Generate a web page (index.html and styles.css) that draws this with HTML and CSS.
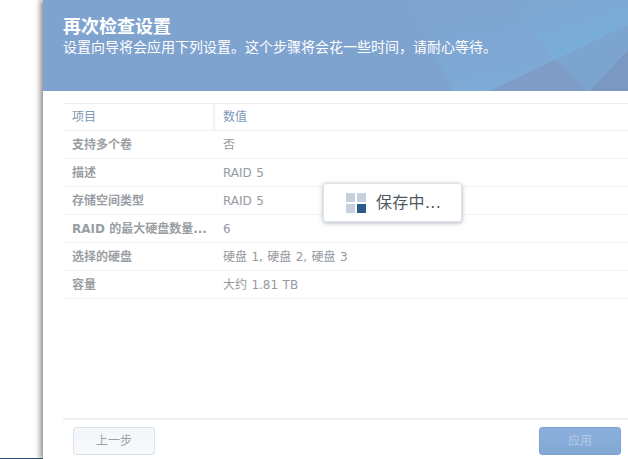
FILE: index.html
```html
<!DOCTYPE html>
<html lang="zh">
<head>
<meta charset="utf-8">
<title>再次检查设置</title>
<link rel="stylesheet" href="styles.css">
</head>
<body>
<div class="desktop">
  <section class="wizard">
    <header class="banner">
      <svg class="banner-art" width="585" height="91" viewBox="0 0 585 91" aria-hidden="true">
        <defs>
          <linearGradient id="glow" x1="0" y1="0" x2="0.6" y2="1">
            <stop offset="0" stop-color="#7ea5cf"/>
            <stop offset="1" stop-color="#79aedc"/>
          </linearGradient>
          <linearGradient id="mid" x1="0" y1="0" x2="0.4" y2="1">
            <stop offset="0" stop-color="#7fa3cf"/>
            <stop offset="1" stop-color="#7eaad6"/>
          </linearGradient>
        </defs>
        <polygon points="410,91 364,0 585,0 585,91" fill="url(#mid)"/>
        <polygon points="465,0 585,0 585,25 512,60" fill="url(#glow)"/>
        <polygon points="447,91 512,60 544,91" fill="#7e9cc5"/>
        <polygon points="512,60 585,25 585,50 547,91 544,91" fill="#7da4cf"/>
        <polygon points="547,91 585,50 585,91" fill="#7a98c0"/>
      </svg>
      <h1 class="banner-title">再次检查设置</h1>
      <p class="banner-sub">设置向导将会应用下列设置。这个步骤将会花一些时间&#xFF0C;请耐心等待。</p>
    </header>

    <main class="content">
      <div class="grid">
        <div class="row row-head">
          <div class="cell cell-key cell-head">项目</div>
          <div class="cell cell-val cell-head">数值</div>
        </div>
        <div class="row"><div class="cell cell-key">支持多个卷</div><div class="cell cell-val">否</div></div>
        <div class="row"><div class="cell cell-key">描述</div><div class="cell cell-val">RAID 5</div></div>
        <div class="row"><div class="cell cell-key">存储空间类型</div><div class="cell cell-val">RAID 5</div></div>
        <div class="row"><div class="cell cell-key">RAID 的最大硬盘数量...</div><div class="cell cell-val">6</div></div>
        <div class="row"><div class="cell cell-key">选择的硬盘</div><div class="cell cell-val">硬盘 1, 硬盘 2, 硬盘 3</div></div>
        <div class="row"><div class="cell cell-key">容量</div><div class="cell cell-val">大约 1.81 TB</div></div>
      </div>
    </main>

    <footer class="actions">
      <button class="btn btn-back" type="button">上一步</button>
      <button class="btn btn-apply" type="button" disabled>应用</button>
    </footer>
  </section>

  <div class="toast">
    <span class="spinner" aria-hidden="true"><i></i><i></i><i></i><i class="on"></i></span>
    <span class="toast-text">保存中...</span>
  </div>
  <div class="taskbar-edge"></div>
</div>
</body>
</html>
```
FILE: styles.css
```css
* { box-sizing: border-box; }
html, body { margin: 0; padding: 0; height: 100%; background: #fff; overflow: hidden; }
body { font-family: "DejaVu Sans", "Noto Sans CJK SC", sans-serif; font-size: 12px; }

.desktop { position: relative; width: 628px; height: 459px; overflow: hidden; background: #fff; }

.wizard {
  position: absolute; left: 43px; top: 0; width: 585px; height: 459px;
  display: flex; flex-direction: column;
  background: #fff;
  box-shadow: -3px 0 5px rgba(60, 60, 60, .55);
}

.banner {
  position: relative; height: 91px; flex: none;
  background: #7fa3cf; color: #fff;
  padding: 17px 20px 0;
  overflow: hidden;
}
.banner-art { position: absolute; left: 0; top: 0; display: block; }
.banner-title { position: relative; margin: 0; font-size: 18px; line-height: 20px; font-weight: 700; }
.banner-sub { position: relative; margin: 0; font-size: 14px; line-height: 20px; }

.content { flex: 1; padding: 12px 0 0 20px; display: flex; flex-direction: column; }
.grid { border-top: 1px solid #eaedf1; }
.row { display: flex; height: 28px; border-bottom: 1px solid #f0f2f5; }
.row-head { height: 27px; border-bottom-color: #eef0f4; }
.cell { padding-top: 1px; line-height: 26px; color: #959a9f; white-space: nowrap; }
.row-head .cell { padding-top: 0; }
.cell-key { width: 152px; padding-left: 9px; font-weight: 700; color: #9a9ea3; }
.cell-val { flex: 1; padding-left: 8px; word-spacing: .6px; }
.cell-head { color: #8197b5; font-weight: 400; }
.cell-head.cell-key { border-right: 2px solid #f0f2f6; }

.actions {
  flex: none; height: 41px; margin-left: 20px; padding: 7px 7px 0 10px;
  display: flex; justify-content: space-between; align-items: flex-start;
  border-top: 2px solid #efefef;
}
.btn {
  width: 82px; height: 28px; padding: 0; border-radius: 3px;
  font: inherit; font-size: 12px; line-height: 26px;
}
.btn-back { border: 1px solid #dde3ea; background: linear-gradient(#f2f6fa, #f8fafc); color: #9a9fa5; }
.btn-apply { border: 1px solid #7fa3cf; background: linear-gradient(#8bb0dd, #84a8d4); color: #b5cbe6; }

.toast {
  position: absolute; left: 323px; top: 183px; width: 139px; height: 39px;
  display: flex; align-items: center; gap: 10px; padding-left: 22px;
  background: #fff; border-radius: 3px;
  border: 1px solid #dfe3e8;
  box-shadow: 0 1px 4px rgba(90, 105, 125, .5);
}
.spinner { display: grid; grid-template-columns: 9px 9px; grid-auto-rows: 9px; gap: 2px; }
.spinner i { display: block; background: #c6d1dd; }
.spinner i.on { background: #2b5a8f; }
.toast-text { font-size: 16px; line-height: 20px; letter-spacing: .3px; color: #4e5760; }

.taskbar-edge { position: absolute; left: 0; bottom: 0; width: 43px; height: 1px; background: #274a70; }
```
